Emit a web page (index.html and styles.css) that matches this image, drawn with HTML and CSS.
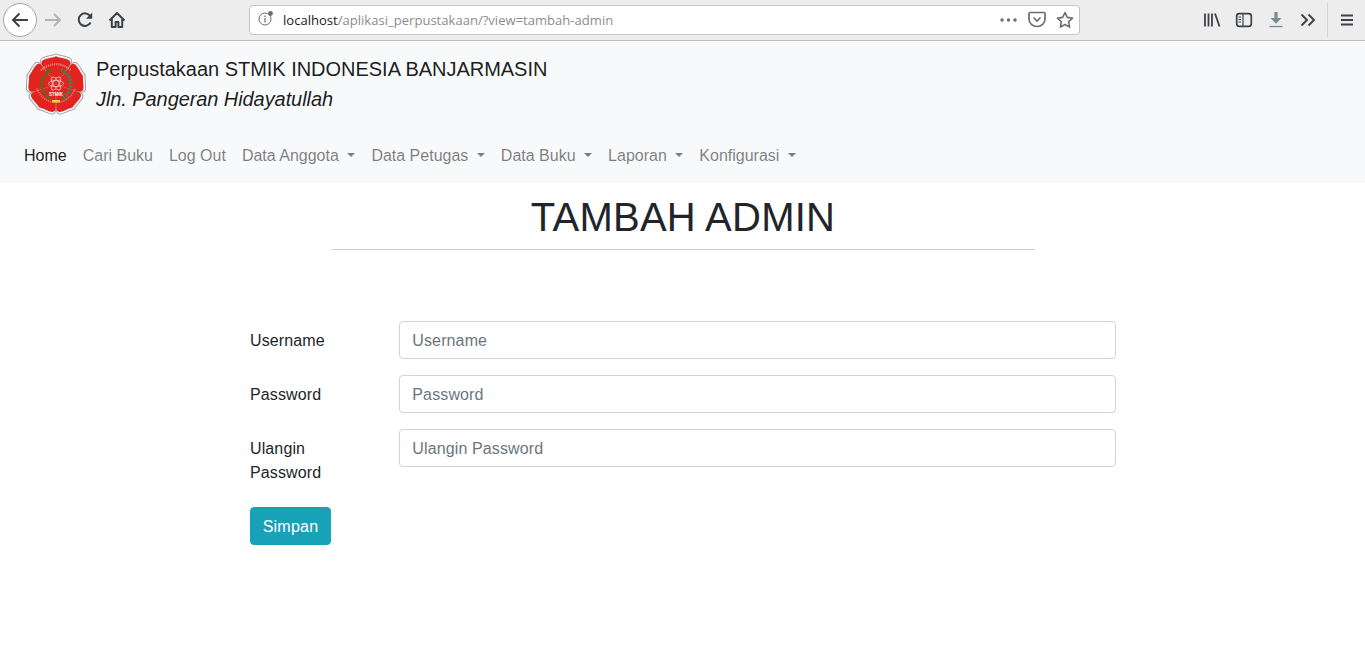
FILE: index.html
```html
<!DOCTYPE html>
<html lang="id">
<head>
<meta charset="utf-8">
<title>Perpustakaan</title>
<link rel="stylesheet" href="styles.css">
</head>
<body>
<header class="browser">
  <button class="back" aria-label="Back">
    <svg width="20" height="20" viewBox="0 0 20 20"><path d="M18 10H3M9.500 3.500 3 10l6.500 6.500" fill="none" stroke="#3d4149" stroke-width="2"/></svg>
  </button>
  <span class="tool"><svg width="20" height="20" viewBox="0 0 20 20"><path d="M2 10h15M11 4l6 6-6 6" fill="none" stroke="#b1b2b4" stroke-width="2"/></svg></span>
  <span class="tool"><svg width="18" height="18" viewBox="0 0 18 18"><path d="M14.600 11.500A6.300 6.300 0 1 1 14.400 5.400" fill="none" stroke="#3d4149" stroke-width="2"/><path d="M16.200 1.600v6.200H10z" fill="#3d4149"/></svg></span>
  <span class="tool"><svg width="18" height="18" viewBox="0 0 18 18"><path d="M1.500 9.500 9 2l7.500 7.500M3.800 8v8h3.800v-5h2.800v5h3.800V8" fill="none" stroke="#3d4149" stroke-width="2" stroke-linejoin="round"/></svg></span>
  <div class="urlbar">
    <svg class="info" width="17" height="17" viewBox="0 0 17 17"><circle cx="7" cy="9" r="6" fill="none" stroke="#6a6d73" stroke-width="1"/><path d="M7 8v4.500M7 5.600v1.400" stroke="#6a6d73" stroke-width="1.200"/><circle cx="12.500" cy="3.500" r="2.400" fill="#6a6d73"/></svg>
    <span class="url"><span class="host">localhost</span>/aplikasi_perpustakaan/?view=tambah-admin</span>
    <svg class="dots" width="17" height="4" viewBox="0 0 17 4"><circle cx="2" cy="2" r="1.700"/><circle cx="8.500" cy="2" r="1.700"/><circle cx="15" cy="2" r="1.700"/></svg>
    <svg class="pocket" width="18" height="17" viewBox="0 0 18 17"><path d="M2 1.500h14a1 1 0 0 1 1 1V8a8 7.500 0 0 1-16 0V2.500a1 1 0 0 1 1-1z" fill="none" stroke="#6a6d73" stroke-width="1.700"/><path d="M5.500 6.500 9 10l3.500-3.500" fill="none" stroke="#6a6d73" stroke-width="1.700"/></svg>
    <svg class="star" width="18" height="17" viewBox="0 0 18 17"><path d="M9 1.500l2.300 4.900 5.200.7-3.800 3.700.9 5.300L9 13.500l-4.600 2.600.9-5.300L1.500 7.100l5.200-.7z" fill="none" stroke="#6a6d73" stroke-width="1.600" stroke-linejoin="round"/></svg>
  </div>
  <div class="tools-right">
    <span class="tool"><svg width="18" height="16" viewBox="0 0 18 16"><path d="M2 1.500v13M5.500 1.500v13M9 1.500v13M12 1.500l4.500 13" fill="none" stroke="#3d4149" stroke-width="1.800"/></svg></span>
    <span class="tool"><svg width="18" height="16" viewBox="0 0 18 16"><rect x="1.700" y="1.700" width="14.600" height="12.600" rx="2.500" fill="none" stroke="#3d4149" stroke-width="1.700"/><path d="M8 2v12M3.500 5H6M3.500 7.500H6M3.500 10H6" stroke="#3d4149" stroke-width="1.200" fill="none"/></svg></span>
    <span class="tool"><svg width="16" height="17" viewBox="0 0 16 17"><path d="M8 1v6" stroke="#7b8a8f" stroke-width="3.200"/><path d="M2.500 7h11L8 12.800z" fill="#7b8a8f"/><path d="M1.500 15.500h13" stroke="#7b8a8f" stroke-width="1.300"/></svg></span>
    <span class="tool"><svg width="16" height="14" viewBox="0 0 16 14"><path d="M1.500 1.500 7 7l-5.500 5.500M8.500 1.500 14 7l-5.500 5.500" fill="none" stroke="#3d4149" stroke-width="1.900"/></svg></span>
    <span class="sep"></span>
    <span class="tool"><svg width="14" height="12" viewBox="0 0 14 12"><path d="M1 1.500h12M1 6h12M1 10.500h12" stroke="#3d4149" stroke-width="1.800"/></svg></span>
  </div>
</header>

<nav class="navbar">
  <div class="brand">
    <svg class="logo" width="64" height="70" viewBox="0 0 64 70">
      <defs>
        <path id="petal" d="M0 0-14-19.800C-20-28.500-7-27.500 0-30.500 7-27.500 20-28.500 14-19.800z"/>
        <g id="flower">
          <use href="#petal"/>
          <use href="#petal" transform="rotate(72)"/>
          <use href="#petal" transform="rotate(144)"/>
          <use href="#petal" transform="rotate(216)"/>
          <use href="#petal" transform="rotate(288)"/>
        </g>
      </defs>
      <g transform="translate(32 33.500)">
        <use href="#flower" fill="#fff" stroke="#9a9a9a" stroke-width="1"/>
        <use href="#flower" fill="#e2231f" transform="scale(.93)"/>
        <path d="M-15-14A21 21 0 0 1 15-14" fill="none" stroke="#f4b7ad" stroke-width="2.200" stroke-dasharray="1.100 1" stroke-opacity=".7"/>
        <path d="M-19 4A20 20 0 0 0 19 4" fill="none" stroke="#f4b7ad" stroke-width="1.800" stroke-dasharray="1.100 1" stroke-opacity=".55"/>
        <path d="M-4-15A16 16 0 0 0-6 14" fill="none" stroke="#6a6220" stroke-width="2.800"/>
        <path d="M5-15A16 16 0 0 1 6 14" fill="none" stroke="#2b8f5f" stroke-width="3.400" stroke-dasharray="2 1.300"/>
        <g fill="none" stroke="#f7c9c1" stroke-width=".8" transform="translate(0 -1)">
          <ellipse rx="7.500" ry="3"/>
          <ellipse rx="7.500" ry="3" transform="rotate(60)"/>
          <ellipse rx="7.500" ry="3" transform="rotate(120)"/>
        </g>
        <text class="logo-text" x="0" y="11.500">STMIK</text>
        <rect x="-4" y="15.500" width="8" height="2.500" fill="#f4d22c"/>
      </g>
    </svg>
    <div class="brand-text">
      <div class="brand-name">Perpustakaan STMIK INDONESIA BANJARMASIN</div>
      <div class="brand-address">Jln. Pangeran Hidayatullah</div>
    </div>
  </div>
  <ul class="menu">
    <li><a class="link active" href="#">Home</a></li>
    <li><a class="link" href="#">Cari Buku</a></li>
    <li><a class="link" href="#">Log Out</a></li>
    <li><a class="link caret" href="#">Data Anggota </a></li>
    <li><a class="link caret" href="#">Data Petugas </a></li>
    <li><a class="link caret" href="#">Data Buku </a></li>
    <li><a class="link caret" href="#">Laporan </a></li>
    <li><a class="link caret" href="#">Konfigurasi </a></li>
  </ul>
</nav>

<main class="content">
  <h1 class="title">TAMBAH ADMIN</h1>
  <hr class="rule">
  <form class="form">
    <label class="label" for="u">Username</label>
    <input class="input" id="u" type="text" placeholder="Username">
    <label class="label" for="p">Password</label>
    <input class="input" id="p" type="password" placeholder="Password">
    <label class="label" for="r">Ulangin Password</label>
    <input class="input" id="r" type="password" placeholder="Ulangin Password">
    <button class="submit" type="button">Simpan</button>
  </form>
</main>
</body>
</html>
```

FILE: styles.css
```css
* { box-sizing: border-box; }
html, body { margin: 0; height: 100%; }
body {
  font-family: "Liberation Sans", Arial, sans-serif;
  font-size: 16px;
  line-height: 1.5;
  color: #212529;
  background: #fff;
  overflow: hidden;
}
.browser {
  height: 41px;
  display: flex;
  align-items: center;
  padding: 0 2px 1px 3px;
  background: #ededed;
  border-bottom: 1px solid #bcbcbc;
}
.back {
  width: 34px;
  height: 34px;
  padding: 0;
  display: flex;
  align-items: center;
  justify-content: center;
  background: #fff;
  border: 1px solid #a6a6a6;
  border-radius: 50%;
}
.tool {
  width: 32px;
  height: 32px;
  flex: none;
  display: flex;
  align-items: center;
  justify-content: center;
}
.urlbar {
  margin-left: 116px;
  width: 831px;
  height: 30px;
  display: flex;
  align-items: center;
  padding: 0 5px 0 8px;
  background: #fff;
  border: 1px solid #c4c4c4;
  border-radius: 4px;
}
.info { flex: none; margin-top: -3px; }
.url {
  margin-left: 8px;
  flex: 1;
  padding-top: 2px;
  font-family: "Open Sans", sans-serif;
  font-size: 13.07px;
  color: #8c8c8c;
  white-space: nowrap;
}
.host { color: #222; }
.dots { fill: #6a6d73; margin-right: 11px; }
.pocket { margin-right: 10px; }
.tools-right {
  margin-left: auto;
  display: flex;
  align-items: center;
}
.sep {
  width: 1px;
  height: 34px;
  margin: 0 3px;
  background: #d4d4d4;
}
.navbar {
  height: 142px;
  padding: 8px 16px;
  background: #f8f9fa;
}
.brand {
  height: 86px;
  display: flex;
  align-items: flex-start;
}
.logo { flex: none; margin: 2px 0 0 8px; }
.brand-text { margin: 5px 0 0 8px; }
.brand-name,
.brand-address {
  font-size: 20px;
  line-height: 30px;
  color: rgba(0, 0, 0, .9);
}
.brand-name { letter-spacing: -.025px; }
.brand-address { font-style: italic; letter-spacing: -.08px; }
.menu {
  list-style: none;
  margin: 0;
  padding: 0;
  display: flex;
}
.link {
  display: block;
  padding: 9px 8px 7px;
  color: rgba(0, 0, 0, .5);
  text-decoration: none;
}
.link.active { color: rgba(0, 0, 0, .9); }
.caret::after {
  content: "";
  display: inline-block;
  margin-left: .255em;
  vertical-align: .255em;
  border-top: .3em solid;
  border-right: .3em solid transparent;
  border-left: .3em solid transparent;
}
.content {
  width: 866px;
  margin: 10px 0 0 250px;
  display: flex;
  flex-direction: column;
  align-items: center;
}
.title {
  margin: 0 0 8px;
  font-size: 40px;
  font-weight: 400;
  line-height: 48px;
  letter-spacing: .25px;
}
.rule {
  width: 703px;
  margin: 0 0 71px;
  border: 0;
  border-top: 1px solid #ccc;
}
.form {
  width: 100%;
  display: grid;
  grid-template-columns: 119.33px 1fr;
  column-gap: 30px;
  row-gap: 16px;
  align-items: start;
  letter-spacing: .12px;
}
.label { padding: 8px 0 6px; }
.input {
  width: 100%;
  height: 38px;
  padding: 7px 12px 5px;
  font: inherit;
  letter-spacing: inherit;
  color: #495057;
  background: #fff;
  border: 1px solid #ced4da;
  border-radius: 4px;
}
.input::placeholder { color: #6c757d; opacity: 1; }
.submit {
  grid-column: 1 / -1;
  justify-self: start;
  width: 81px;
  height: 38px;
  padding: 7px 0 5px;
  font: inherit;
  letter-spacing: .25px;
  color: #fff;
  background: #17a2b8;
  border: 1px solid #17a2b8;
  border-radius: 4px;
}
.logo-text {
  font-family: "Liberation Sans", sans-serif;
  font-size: 4.500px;
  font-weight: 700;
  text-anchor: middle;
  fill: #fff;
}
```
